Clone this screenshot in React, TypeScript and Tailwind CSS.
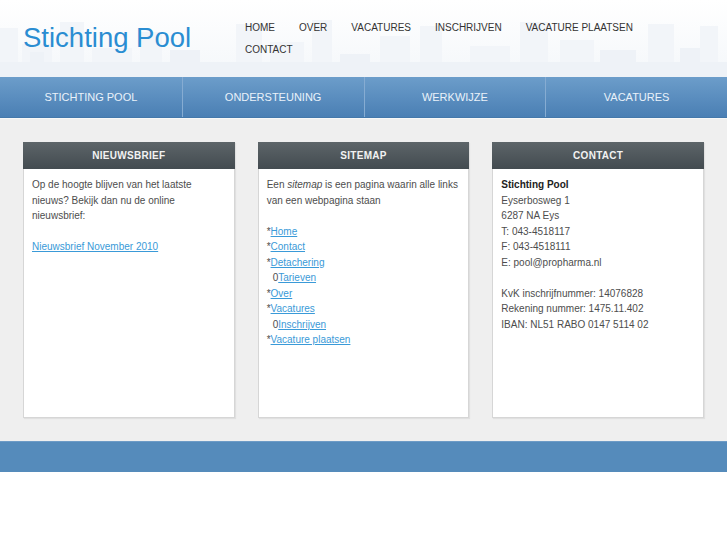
import React from 'react';

const topLinks = ['Home', 'Over', 'Vacatures', 'Inschrijven', 'Vacature plaatsen', 'Contact'];
const mainNav = ['Stichting Pool', 'Ondersteuning', 'Werkwijze', 'Vacatures'];

const Skyline: React.FC = () => (
  <svg className="absolute inset-0 h-full w-full" viewBox="0 0 727 77" preserveAspectRatio="none">
    <g fill="#f2f5f9">
      <rect x="0" y="28" width="18" height="49" />
      <rect x="22" y="44" width="30" height="33" />
      <rect x="60" y="22" width="24" height="55" />
      <rect x="92" y="48" width="40" height="29" />
      <rect x="140" y="32" width="22" height="45" />
      <rect x="236" y="24" width="26" height="53" />
      <rect x="270" y="42" width="34" height="35" />
      <rect x="312" y="20" width="20" height="57" />
      <rect x="380" y="36" width="30" height="41" />
      <rect x="420" y="26" width="22" height="51" />
      <rect x="470" y="46" width="40" height="31" />
      <rect x="520" y="22" width="28" height="55" />
      <rect x="560" y="40" width="34" height="37" />
      <rect x="648" y="24" width="26" height="53" />
      <rect x="700" y="26" width="18" height="51" />
    </g>
    <g fill="#eef2f7">
      <rect x="0" y="62" width="727" height="15" />
      <rect x="30" y="52" width="14" height="25" />
      <rect x="170" y="50" width="30" height="27" />
      <rect x="340" y="54" width="30" height="23" />
      <rect x="600" y="50" width="36" height="27" />
      <rect x="680" y="48" width="20" height="29" />
    </g>
  </svg>
);

const Box: React.FC<{ title: string; children: React.ReactNode }> = ({ title, children }) => (
  <div className="flex h-[276px] flex-col border border-[#d6d6d6] bg-white shadow-[1px_1px_1px_rgba(0,0,0,0.06)]">
    <div className="-mx-px -mt-px flex h-[27px] items-center justify-center bg-gradient-to-b from-[#5d6569] to-[#434b50] text-[10px] font-bold uppercase tracking-[0.3px] text-[#f2f2f2]">
      {title}
    </div>
    <div className="px-2 pt-[8px] text-[10px] leading-[15.5px] text-[#4d4d4d]">{children}</div>
  </div>
);

const Link: React.FC<{ children: React.ReactNode }> = ({ children }) => (
  <a href="#" className="text-[#3a9ad8] underline">
    {children}
  </a>
);

export default function App() {
  return (
    <div className="min-h-[545px] bg-white" style={{ fontFamily: '"Liberation Sans", Arial, sans-serif' }}>
      <header className="relative h-[77px] overflow-hidden bg-gradient-to-b from-white to-[#f4f7fa]">
        <Skyline />
        <div className="relative flex">
          <h1 className="ml-[23px] mt-[20px] w-[222px] text-[27.5px] leading-[36px] text-[#2a8dd2]">Stichting Pool</h1>
          <nav className="mt-[17px] flex w-[420px] flex-wrap gap-x-[24px] text-[10px] uppercase leading-[22px] text-[#333]">
            {topLinks.map((l) => (
              <a key={l} href="#">{l}</a>
            ))}
          </nav>
        </div>
      </header>

      <nav className="grid h-[41px] grid-cols-4 border-b border-[#4478aa] bg-gradient-to-b from-[#6c9dca] to-[#4a7fb4]">
        {mainNav.map((l, i) => (
          <div
            key={l}
            className={`flex items-center justify-center pt-px text-[11px] uppercase text-[#eaf2fa] ${i > 0 ? 'border-l border-[#86acd2]' : ''}`}
          >
            {l}
          </div>
        ))}
      </nav>
      <div className="h-px bg-[#f7f7f7]" />

      <main className="grid grid-cols-3 gap-[23px] bg-[#efefef] px-[23px] pb-[23px] pt-[23px]">
        <Box title="Nieuwsbrief">
          <p>Op de hoogte blijven van het laatste nieuws? Bekijk dan nu de online nieuwsbrief:</p>
          <p className="mt-[15.5px]">
            <Link>Nieuwsbrief November 2010</Link>
          </p>
        </Box>
        <Box title="Sitemap">
          <p>
            Een <em>sitemap</em> is een pagina waarin alle links van een webpagina staan
          </p>
          <ul className="mt-[15.5px]">
            <li>*<Link>Home</Link></li>
            <li>*<Link>Contact</Link></li>
            <li>*<Link>Detachering</Link></li>
            <li className="pl-[6px]">0<Link>Tarieven</Link></li>
            <li>*<Link>Over</Link></li>
            <li>*<Link>Vacatures</Link></li>
            <li className="pl-[6px]">0<Link>Inschrijven</Link></li>
            <li>*<Link>Vacature plaatsen</Link></li>
          </ul>
        </Box>
        <Box title="Contact">
          <p>
            <strong className="text-[#222]">Stichting Pool</strong>
            <br />
            Eyserbosweg 1
            <br />
            6287 NA Eys
            <br />
            T: 043-4518117
            <br />
            F: 043-4518111
            <br />
            E: pool@propharma.nl
          </p>
          <p className="mt-[15.5px]">
            KvK inschrijfnummer: 14076828
            <br />
            Rekening nummer: 1475.11.402
            <br />
            IBAN: NL51 RABO 0147 5114 02
          </p>
        </Box>
      </main>

      <footer className="h-[31px] border-t border-[#6d9bc6] bg-[#558bbb]" />
    </div>
  );
}
